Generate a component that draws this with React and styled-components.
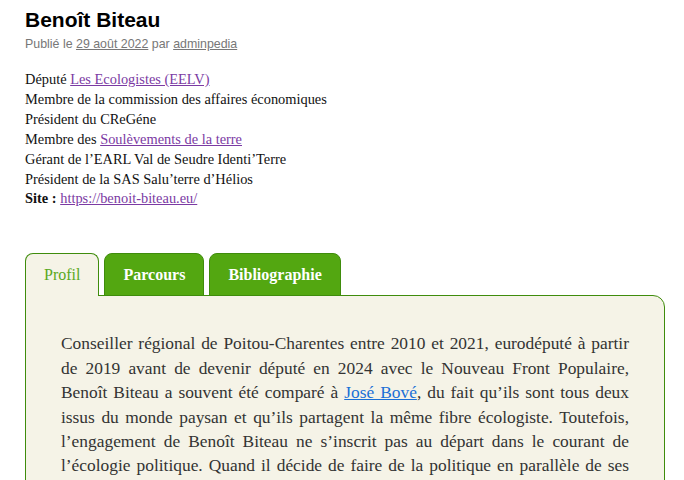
import React, { useState } from "react";
import styled, { createGlobalStyle } from "styled-components";

const GlobalStyle = createGlobalStyle`
  body {
    margin: 0;
    background: #fff;
    font-family: "Liberation Serif", Georgia, serif;
  }
`;

const Page = styled.article`
  padding: 5px 19px 0 25px;
`;

const Title = styled.h1`
  margin: 0;
  font-family: "Liberation Sans", Arial, sans-serif;
  font-size: 21px;
  font-weight: bold;
  line-height: 29px;
  color: #000;
`;

const Meta = styled.div`
  margin-top: 2px;
  font-family: "Liberation Sans", Arial, sans-serif;
  font-size: 12.4px;
  line-height: 16px;
  color: #777;

  a {
    color: #777;
  }
`;

const Infos = styled.div`
  margin-top: 18px;
  font-size: 14.4px;
  line-height: 19.9px;
  color: #111;

  a {
    color: #7b3aa3;
  }
`;

const TabBar = styled.div`
  display: flex;
  gap: 5px;
  margin-top: 44px;
  position: relative;
  z-index: 1;
`;

const Tab = styled.button`
  height: 43px;
  padding: 0 18px;
  font-family: "Liberation Serif", Georgia, serif;
  font-size: 16px;
  font-weight: ${(p) => (p.$active ? "normal" : "bold")};
  border: 1px solid #3f8c0c;
  border-bottom: ${(p) => (p.$active ? "none" : "1px solid #3f8c0c")};
  border-radius: 8px 8px 0 0;
  background: ${(p) => (p.$active ? "#f5f3e7" : "#53a711")};
  color: ${(p) => (p.$active ? "#5aa81e" : "#fff")};
  cursor: pointer;
`;

const Panel = styled.div`
  margin-top: -1px;
  border: 1px solid #3f8c0c;
  border-radius: 0 12px 0 0;
  background: #f5f3e7;
  padding: 35px 35px 20px 35px;
`;

const Text = styled.p`
  margin: 0;
  font-size: 17.4px;
  line-height: 24.4px;
  color: #333;
  text-align: justify;

  a {
    color: #1a6fd6;
  }
`;

const tabs = ["Profil", "Parcours", "Bibliographie"];

export default function App() {
  const [active, setActive] = useState(0);

  return (
    <Page>
      <GlobalStyle />
      <Title>Benoît Biteau</Title>
      <Meta>
        Publié le <a href="#">29 août 2022</a> par <a href="#">adminpedia</a>
      </Meta>
      <Infos>
        Député <a href="#">Les Ecologistes (EELV)</a>
        <br />
        Membre de la commission des affaires économiques
        <br />
        Président du CReGéne
        <br />
        Membre des <a href="#">Soulèvements de la terre</a>
        <br />
        Gérant de l’EARL Val de Seudre Identi’Terre
        <br />
        Président de la SAS Salu’terre d’Hélios
        <br />
        <strong>Site :</strong> <a href="#">https://benoit-biteau.eu/</a>
      </Infos>
      <TabBar>
        {tabs.map((t, i) => (
          <Tab key={t} $active={i === active} onClick={() => setActive(i)}>
            {t}
          </Tab>
        ))}
      </TabBar>
      <Panel>
        <Text>
          Conseiller régional de Poitou-Charentes entre 2010 et 2021, eurodéputé à partir
          de 2019 avant de devenir député en 2024 avec le Nouveau Front Populaire,
          Benoît Biteau a souvent été comparé à <a href="#">José Bové</a>, du fait qu’ils sont
          tous deux issus du monde paysan et qu’ils partagent la même fibre écologiste.
          Toutefois, l’engagement de Benoît Biteau ne s’inscrit pas au départ dans le
          courant de l’écologie politique. Quand il décide de faire de la politique en
          parallèle de ses activités agricoles, il rejoint d’abord le Parti radical de gauche.
        </Text>
      </Panel>
    </Page>
  );
}
